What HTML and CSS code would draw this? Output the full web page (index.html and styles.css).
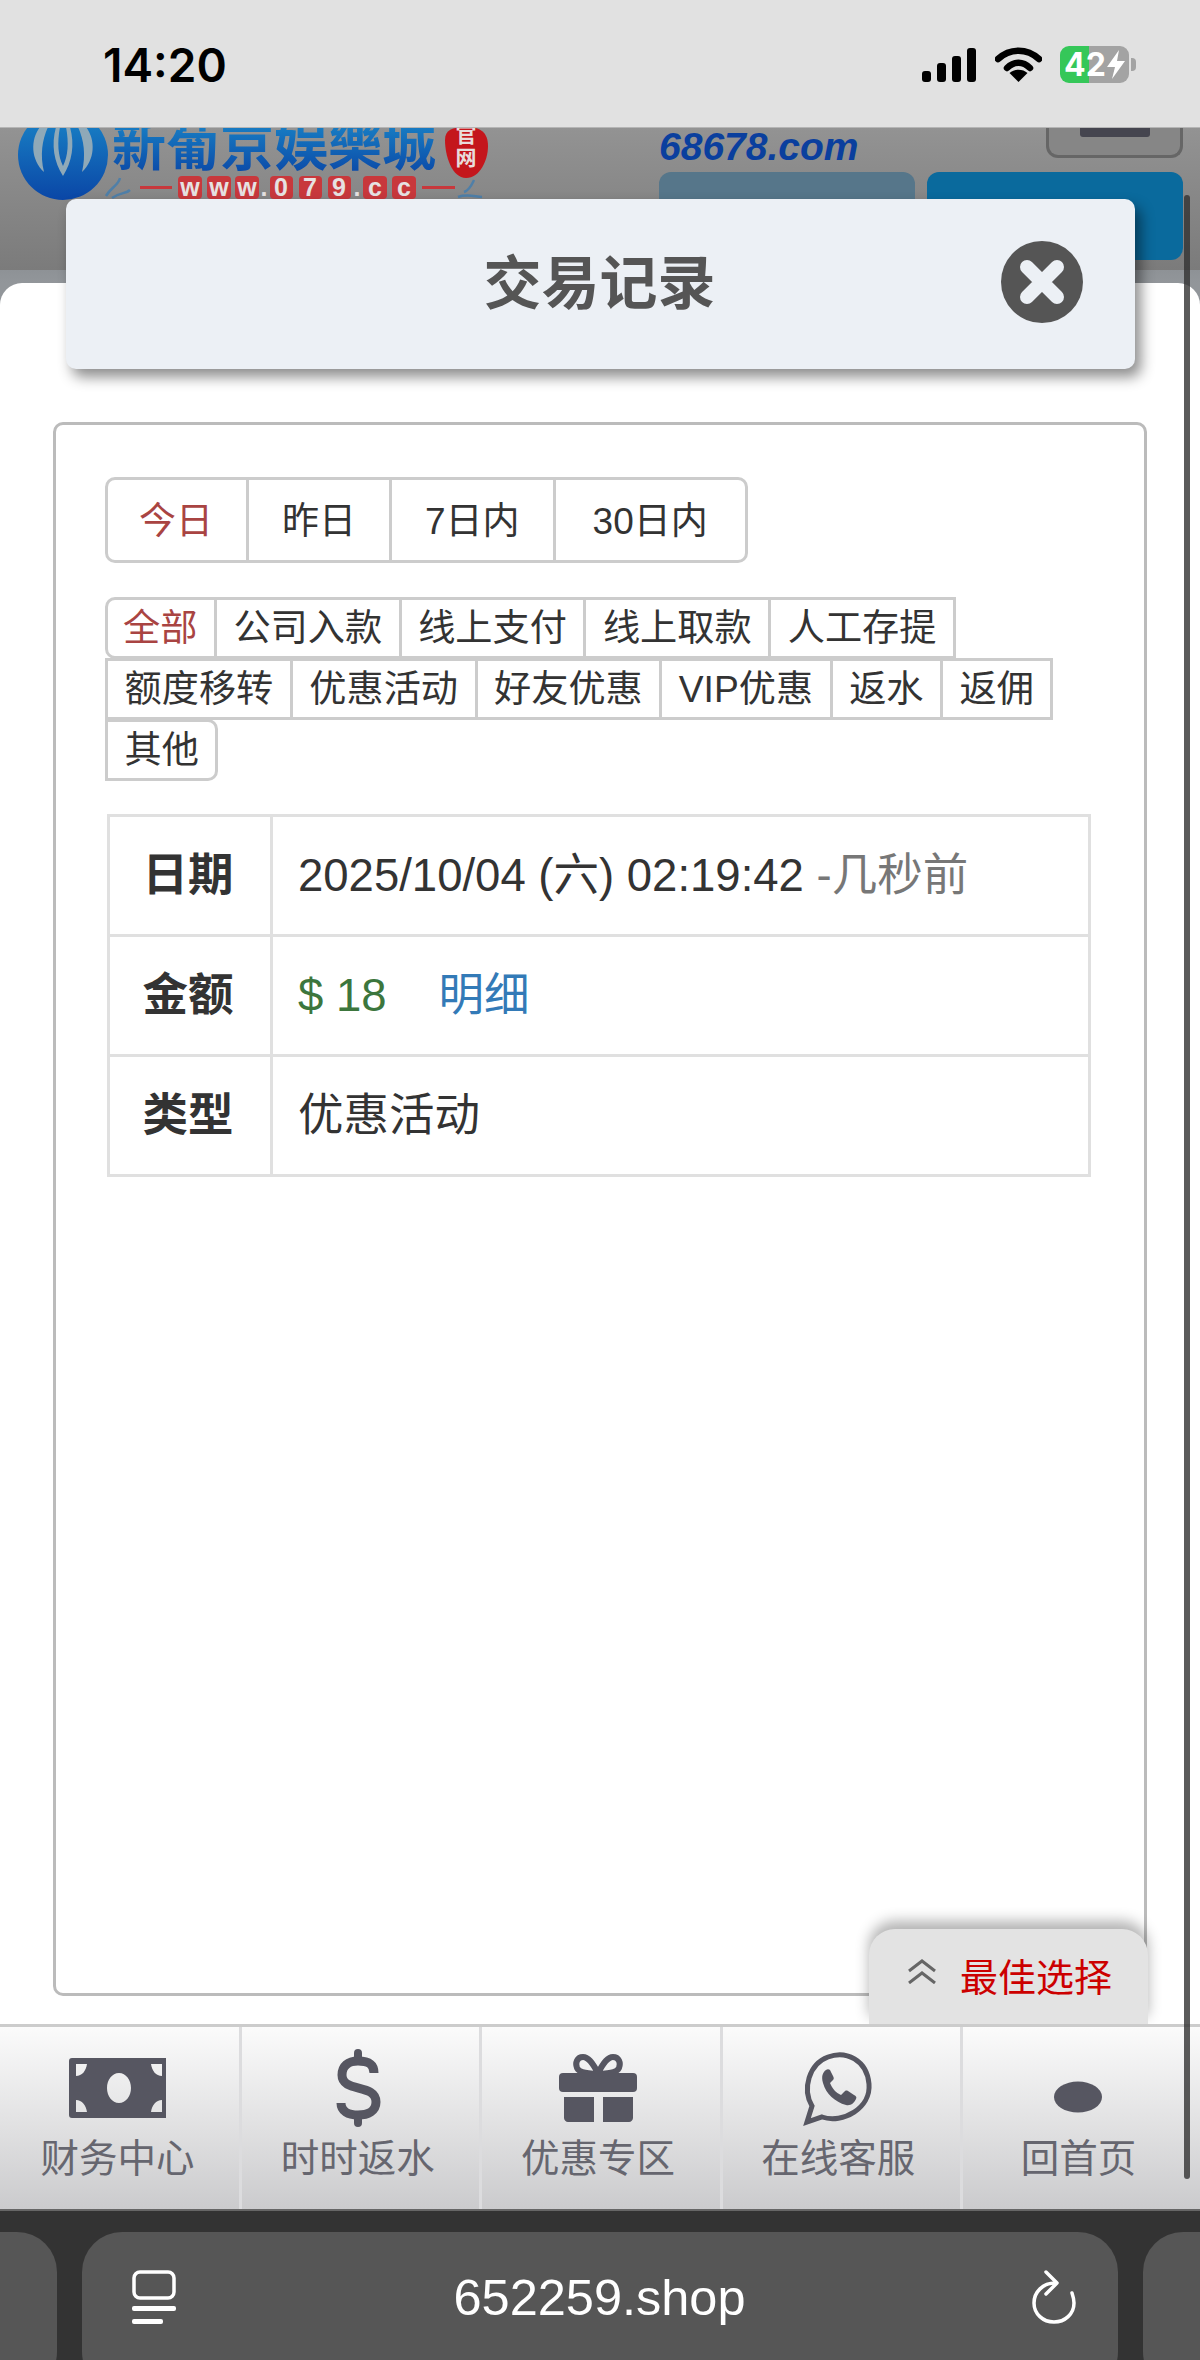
FILE: index.html
```html
<!DOCTYPE html>
<html lang="zh-CN">
<head>
  <meta charset="UTF-8">
  <meta name="viewport" content="width=device-width, initial-scale=1.0">
  <title>交易记录</title>
  <link rel="stylesheet" href="styles.css">
</head>
<body>
  <div class="phone">

    <!-- Status bar -->
    <div class="statusbar">
      <span class="time">14:20</span>
      <div class="status-icons">
        <svg class="signal" width="54" height="34" viewBox="0 0 54 34">
          <rect x="0" y="23" width="9" height="11" rx="3"/>
          <rect x="15" y="15" width="9" height="19" rx="3"/>
          <rect x="30" y="8" width="9" height="26" rx="3"/>
          <rect x="45" y="0" width="9" height="34" rx="3"/>
        </svg>
        <svg class="wifi" width="47" height="35" viewBox="0 0 47 35">
          <path d="M3 12C15 1 32 1 44 12" fill="none" stroke="#000" stroke-width="6.500" stroke-linecap="round"/>
          <path d="M12 21C19 14 28 14 35 21" fill="none" stroke="#000" stroke-width="6.500" stroke-linecap="round"/>
          <path d="M23.500 35L14.500 26C19 21.500 28 21.500 32.500 26Z"/>
        </svg>
        <div class="battery">
          <span>42</span>
          <svg width="18" height="29" viewBox="0 0 18 29"><path d="M12 0L0 17H8L5 29L18 11H10Z" fill="#fff"/></svg>
        </div>
        <span class="battery-nub"></span>
      </div>
    </div>

    <div class="screen">
      <!-- Page behind the dialog -->
      <div class="site-head">
        <svg class="logo" width="500" height="76" viewBox="0 127 500 76">
          <defs>
            <linearGradient id="logoBlue" x1="0" y1="0" x2="0" y2="1">
              <stop offset="0" stop-color="#1a86c8"/>
              <stop offset="1" stop-color="#0a46a6"/>
            </linearGradient>
          </defs>
          <circle cx="63" cy="155" r="45" fill="url(#logoBlue)"/>
          <path d="M40 127C30 140 31 160 44 172C40 155 42 140 48 127ZM86 127C96 140 95 160 82 172C86 155 84 140 78 127Z" fill="#8fa9b8"/>
          <path d="M56 127C51 145 54 162 63 176C72 162 75 145 70 127H66C69 143 68 156 63 166C58 156 57 143 60 127Z" fill="#8fa9b8"/>
          <text class="logo-name" x="112" y="166">新葡京娱樂城</text>
          <path d="M445 140C445 130 452 127 466 127C480 127 488 132 488 146C488 160 480 178 466 178C452 178 445 156 445 140Z" fill="#c4161c"/>
          <text class="logo-seal" x="466" y="142">官</text>
          <text class="logo-seal" x="466" y="165">网</text>
          <g fill="#c8383c">
            <rect x="140" y="186" width="32" height="3"/>
            <rect x="422" y="186" width="33" height="3"/>
            <rect x="178" y="176" width="24" height="23" rx="4"/>
            <rect x="207" y="176" width="24" height="23" rx="4"/>
            <rect x="235" y="176" width="24" height="23" rx="4"/>
            <rect x="270" y="176" width="23" height="23" rx="4"/>
            <rect x="299" y="176" width="23" height="23" rx="4"/>
            <rect x="328" y="176" width="23" height="23" rx="4"/>
            <rect x="363" y="176" width="24" height="23" rx="4"/>
            <rect x="392" y="176" width="24" height="23" rx="4"/>
          </g>
          <g class="logo-url">
            <text x="190" y="196">w</text>
            <text x="219" y="196">w</text>
            <text x="247" y="196">w</text>
            <text x="264" y="196" fill="#5c6f80">.</text>
            <text x="281" y="196">0</text>
            <text x="310" y="196">7</text>
            <text x="339" y="196">9</text>
            <text x="357" y="196" fill="#5c6f80">.</text>
            <text x="375" y="196">c</text>
            <text x="404" y="196">c</text>
          </g>
          <path d="M106 196C112 186 118 186 120 178M112 198C120 192 126 194 130 190M458 197C466 194 472 196 482 197M464 192C470 190 472 184 474 180" fill="none" stroke="#4f7fa8" stroke-width="2.500"/>
        </svg>
        <div class="head-right">
          <div class="head-top">
            <span class="head-domain">68678.com</span>
            <span class="menu-btn"><i></i></span>
          </div>
          <div class="head-btns">
            <span class="head-btn head-btn-grey"></span>
            <span class="head-btn head-btn-blue"></span>
          </div>
        </div>
      </div>

      <!-- Dialog panel -->
      <div class="panel">
        <div class="record-box">
          <div class="date-tabs">
            <a class="tab active">今日</a>
            <a class="tab">昨日</a>
            <a class="tab">7日内</a>
            <a class="tab">30日内</a>
          </div>

          <div class="filters">
            <a class="filter filter-first active">全部</a>
            <a class="filter">公司入款</a>
            <a class="filter">线上支付</a>
            <a class="filter">线上取款</a>
            <a class="filter">人工存提</a>
            <a class="filter">额度移转</a>
            <a class="filter">优惠活动</a>
            <a class="filter">好友优惠</a>
            <a class="filter">VIP优惠</a>
            <a class="filter">返水</a>
            <a class="filter">返佣</a>
            <a class="filter filter-last">其他</a>
          </div>

          <table class="detail">
            <tr>
              <th>日期</th>
              <td>2025/10/04 (六) 02:19:42 <span class="ago">-几秒前</span></td>
            </tr>
            <tr>
              <th>金额</th>
              <td><span class="money">$ 18</span><a class="more">明细</a></td>
            </tr>
            <tr>
              <th>类型</th>
              <td>优惠活动</td>
            </tr>
          </table>
        </div>
      </div>

      <!-- Bottom nav -->
      <div class="bottom-nav">
        <a class="nav-item">
          <svg width="100" height="80" viewBox="0 0 100 80">
            <path fill-rule="evenodd" d="M4 10H98V70H4C2 70 1 69 1 67V13C1 11 2 10 4 10ZM51 25C44 25 39 32 39 40C39 48 44 55 51 55C58 55 63 48 63 40C63 32 58 25 51 25ZM8 16V28C14 28 18 23 19 16ZM83 16C84 23 88 28 94 28V16ZM8 52V64H19C18 57 14 52 8 52ZM94 52C88 52 84 57 83 64H94Z"/>
          </svg>
          <span>财务中心</span>
        </a>
        <a class="nav-item">
          <svg width="100" height="80" viewBox="0 0 100 80">
            <path class="icon-line" stroke-width="9" d="M66 25C66 16 60 13 50 13C40 13 34 18 34 27C34 45 68 35 68 54C68 63 60 67 50 67C40 67 33 63 33 55"/>
            <path class="icon-line" stroke-width="8" stroke-linecap="round" d="M50 5V13M50 67V75"/>
          </svg>
          <span>时时返水</span>
        </a>
        <a class="nav-item">
          <svg width="100" height="80" viewBox="0 0 100 80">
            <path class="icon-line" stroke-width="6" d="M50 25C44 14 40 9 35 9C29 9 27 15 29 20C31 24 35 25 50 26C65 25 69 24 71 20C73 15 71 9 65 9C60 9 56 14 50 25Z"/>
            <rect x="11" y="25" width="78" height="19" rx="4"/>
            <path d="M16 49H46V74H20C18 74 16 72 16 70ZM55 49H85V70C85 72 83 74 81 74H55Z"/>
          </svg>
          <span>优惠专区</span>
        </a>
        <a class="nav-item">
          <svg width="100" height="80" viewBox="0 0 100 80">
            <path class="icon-line" stroke-width="5" d="M19 74L24 58C14 41 21 16 40 9C58 2 79 12 81 36C83 60 55 76 34 69Z"/>
            <path d="M38 22C35 24 33 28 35 35C38 46 47 54 58 57C63 58 66 55 68 51C69 49 68 48 66 47L60 43C58 42 57 43 56 44L53 47C48 45 44 40 42 35L45 32C46 31 46 30 45 28L42 22C41 21 39 21 38 22Z"/>
          </svg>
          <span>在线客服</span>
        </a>
        <a class="nav-item">
          <svg width="100" height="80" viewBox="0 0 100 80">
            <ellipse cx="50" cy="49" rx="24" ry="15.500"/>
          </svg>
          <span>回首页</span>
        </a>
      </div>

      <!-- Overlays -->
      <div class="modal-title">
        <h2>交易记录</h2>
        <svg class="close-btn" width="82" height="82" viewBox="0 0 82 82">
          <circle cx="41" cy="41" r="41" fill="#555"/>
          <path d="M26 26L56 56M56 26L26 56" stroke="#ecf0f5" stroke-width="14" stroke-linecap="round"/>
        </svg>
      </div>

      <div class="best-choice">
        <svg width="30" height="25" viewBox="0 0 30 25">
          <path d="M2 12L15 2L28 12M2 24L15 14L28 24" fill="none" stroke="#666" stroke-width="3"/>
        </svg>
        <span>最佳选择</span>
      </div>

      <div class="scrollbar"></div>
    </div>

    <!-- Browser bar -->
    <div class="browser-bar">
      <div class="pill pill-side pill-left"></div>
      <div class="pill pill-url">
        <svg width="44" height="54" viewBox="0 0 44 54">
          <rect x="2" y="2" width="40" height="26" rx="6" fill="none" stroke="#fff" stroke-width="3.500"/>
          <rect x="0" y="36" width="44" height="5" rx="2" fill="#fff"/>
          <rect x="0" y="49" width="31" height="5" rx="2" fill="#fff"/>
        </svg>
        <span class="url">652259.shop</span>
        <svg width="46" height="54" viewBox="0 0 46 54">
          <path d="M24 13C12 13 3 22 3 33C3 44 12 52 23 52C34 52 43 44 43 33C43 29 42 26 41 23" fill="none" stroke="#fff" stroke-width="3.500" stroke-linecap="round"/>
          <path d="M15 2L26 13L15 24" fill="none" stroke="#fff" stroke-width="3.500" stroke-linecap="round" stroke-linejoin="round"/>
        </svg>
      </div>
      <div class="pill pill-side pill-right"></div>
    </div>

  </div>
</body>
</html>
```

FILE: styles.css
```css
/* Reset */
* {
  margin: 0;
  padding: 0;
  box-sizing: border-box;
}

body {
  font-family: 'Liberation Sans', 'Noto Sans CJK SC', sans-serif;
  color: #333;
  background: #fff;
}

.phone {
  width: 1200px;
  height: 2360px;
  display: flex;
  flex-direction: column;
  overflow: hidden;
}

/* Status bar */
.statusbar {
  height: 128px;
  flex-shrink: 0;
  background: #e1e1e1;
  border-bottom: 1px solid #b5b5b5;
  display: flex;
  justify-content: space-between;
  padding: 46px 64px 0 103px;
  position: relative;
  z-index: 2;
}

.time {
  font-family: Inter, 'Liberation Sans', sans-serif;
  font-size: 46px;
  font-weight: 600;
  line-height: 38px;
  color: #000;
}

.status-icons {
  display: flex;
  align-items: flex-start;
}

.signal {
  margin-top: 2px;
  margin-right: 19px;
}

.wifi {
  margin-top: 1px;
  margin-right: 18px;
}

.battery {
  width: 69px;
  height: 37px;
  border-radius: 9px;
  background: linear-gradient(90deg, #35c759 42%, #a3a3a3 42%);
  display: flex;
  align-items: center;
  justify-content: center;
  gap: 1px;
  color: #fff;
  font-family: Inter, 'Liberation Sans', sans-serif;
  font-size: 32px;
  font-weight: 700;
}

.battery-nub {
  width: 5px;
  height: 13px;
  margin-top: 12px;
  margin-left: 2px;
  border-radius: 0 4px 4px 0;
  background: #a3a3a3;
}

.screen {
  flex: 1;
  display: flex;
  flex-direction: column;
  position: relative;
  margin-top: -1px;
  background: linear-gradient(180deg, #92969a 300px, #fff 300px);
}

/* Dimmed page behind the dialog */
.site-head {
  height: 156px;
  flex-shrink: 0;
  display: flex;
  justify-content: space-between;
  padding-right: 17px;
  background: linear-gradient(180deg, #939393 0, #7b7b7b 143px, #8e9296 143px, #92969a 156px);
}

.logo {
  display: block;
}

.logo-name {
  font-size: 54px;
  font-weight: 700;
  fill: url(#logoBlue);
}

.logo-seal {
  font-size: 21px;
  font-weight: 700;
  fill: #e8dcdc;
  text-anchor: middle;
}

.logo-url text {
  font-size: 25px;
  font-weight: 700;
  fill: #e6e2e2;
  text-anchor: middle;
}

.head-right {
  width: 524px;
}

.head-top {
  height: 45px;
  display: flex;
  justify-content: space-between;
  align-items: flex-start;
}

.head-domain {
  font-size: 39px;
  font-weight: 700;
  font-style: italic;
  line-height: 37px;
  margin-top: 1px;
  color: #0a3f9e;
}

.menu-btn {
  width: 137px;
  height: 31px;
  display: flex;
  justify-content: center;
  background: #868686;
  border: 3px solid #666;
  border-top: 0;
  border-radius: 0 0 12px 12px;
}

.menu-btn i {
  width: 70px;
  height: 10px;
  background: #45454f;
  border-radius: 0 0 3px 3px;
}

.head-btns {
  display: flex;
  gap: 12px;
}

.head-btn {
  flex: 1;
  height: 88px;
  border-radius: 12px;
}

.head-btn-grey {
  background: #56768a;
}

.head-btn-blue {
  background: #0a6a9d;
}

/* White panel */
.panel {
  flex: 1;
  background: #fff;
  border-radius: 22px 22px 0 0;
  padding: 139px 53px 28px;
  min-height: 0;
}

.record-box {
  height: 100%;
  border: 3px solid #bbb;
  border-radius: 10px;
  padding: 52px 49px;
}

/* Date tabs */
.date-tabs {
  display: flex;
  height: 86px;
  font-size: 37px;
}

.tab {
  display: flex;
  align-items: center;
  padding: 2px 33px 0;
  border: 3px solid #ccc;
  margin-left: -3px;
  line-height: 1;
}

.tab:first-child {
  margin-left: 0;
  padding-left: 31px;
  border-radius: 10px 0 0 10px;
}

.tab:last-child {
  padding-left: 37px;
  padding-right: 37px;
  border-radius: 0 10px 10px 0;
}

.active {
  color: #a94442;
}

/* Type filters */
.filters {
  display: flex;
  flex-wrap: wrap;
  margin-top: 34px;
  font-size: 37.2px;
}

.filter {
  height: 62px;
  display: flex;
  align-items: center;
  padding: 2px 16.5px 0;
  margin-right: -3px;
  margin-bottom: -1px;
  border: 3px solid #ccc;
  line-height: 1;
}

.filter-first {
  padding-left: 15px;
  border-radius: 10px 0 0 10px;
}

.filter-last {
  border-radius: 0 10px 10px 0;
}

/* Detail table */
.detail {
  width: 984px;
  margin-top: 34px;
  margin-left: 2px;
  border-collapse: collapse;
  font-size: 45.5px;
}

.detail th,
.detail td {
  height: 120px;
  border: 3px solid #e0e0e0;
  line-height: 1;
}

.detail th {
  width: 163px;
  padding: 0 20px 0 16px;
  text-align: center;
  font-weight: 700;
}

.detail td {
  padding: 0 18px 0 25px;
  text-align: left;
}

.ago {
  color: #777;
}

.money {
  color: #3c763d;
}

.more {
  margin-left: 52px;
  color: #337ab7;
}

/* Bottom nav */
.bottom-nav {
  height: 185px;
  flex-shrink: 0;
  display: flex;
  padding-left: 2px;
  border-top: 3px solid #ccc;
  background: linear-gradient(180deg, #fbfbfb, #cbcbcd);
}

.nav-item {
  flex: 1;
  display: flex;
  flex-direction: column;
  align-items: center;
  padding: 21px 6px 0 0;
  border-left: 3px solid #dcdcde;
  font-size: 38.5px;
  color: #66666f;
  line-height: 1;
}

.nav-item:first-child {
  border-left: 0;
}

.nav-item svg {
  display: block;
  fill: #565661;
  margin-bottom: 12px;
}

.icon-line {
  fill: none;
  stroke: #565661;
}

/* Dialog title, sits over the page */
.modal-title {
  position: absolute;
  left: 66px;
  top: 72px;
  width: 1069px;
  height: 170px;
  background: #ecf0f5;
  border-radius: 10px;
  box-shadow: 6px 8px 14px rgba(0, 0, 0, 0.45);
  display: flex;
  align-items: center;
  justify-content: center;
}

.modal-title h2 {
  font-size: 58px;
  font-weight: 700;
  line-height: 1;
  color: #555;
  margin-left: -2px;
}

.close-btn {
  position: absolute;
  right: 52px;
  top: 42px;
}

/* Floating button */
.best-choice {
  position: absolute;
  left: 869px;
  top: 1802px;
  width: 279px;
  height: 95px;
  background: #e3e3e3;
  border-radius: 26px 26px 0 0;
  box-shadow: 0 -8px 14px rgba(0, 0, 0, 0.3);
  clip-path: inset(-30px -30px 0 -30px);
  display: flex;
  align-items: flex-start;
  padding: 30px 0 0 38px;
  gap: 23px;
  font-size: 38px;
  line-height: 1;
  color: #c00;
}

.scrollbar {
  position: absolute;
  left: 1184px;
  top: 68px;
  width: 6px;
  height: 1984px;
  border-radius: 3px;
  background: rgba(50, 50, 50, 0.8);
}

/* Browser bar */
.browser-bar {
  height: 151px;
  flex-shrink: 0;
  background: #333;
  border-top: 2px solid #666;
  display: flex;
  justify-content: space-between;
  gap: 25px;
  padding-top: 21px;
}

.pill {
  height: 160px;
  background: #565656;
  border-radius: 40px;
}

.pill-side {
  width: 100px;
  flex-shrink: 0;
}

.pill-left {
  margin-left: -43px;
}

.pill-right {
  margin-right: -43px;
}

.pill-url {
  flex: 1;
  display: flex;
  justify-content: space-between;
  align-items: flex-start;
  padding: 38px 41px 0 50px;
}

.url {
  font-size: 50.5px;
  line-height: 1;
  color: #fff;
  margin-top: 3px;
  margin-right: 8px;
}
```
